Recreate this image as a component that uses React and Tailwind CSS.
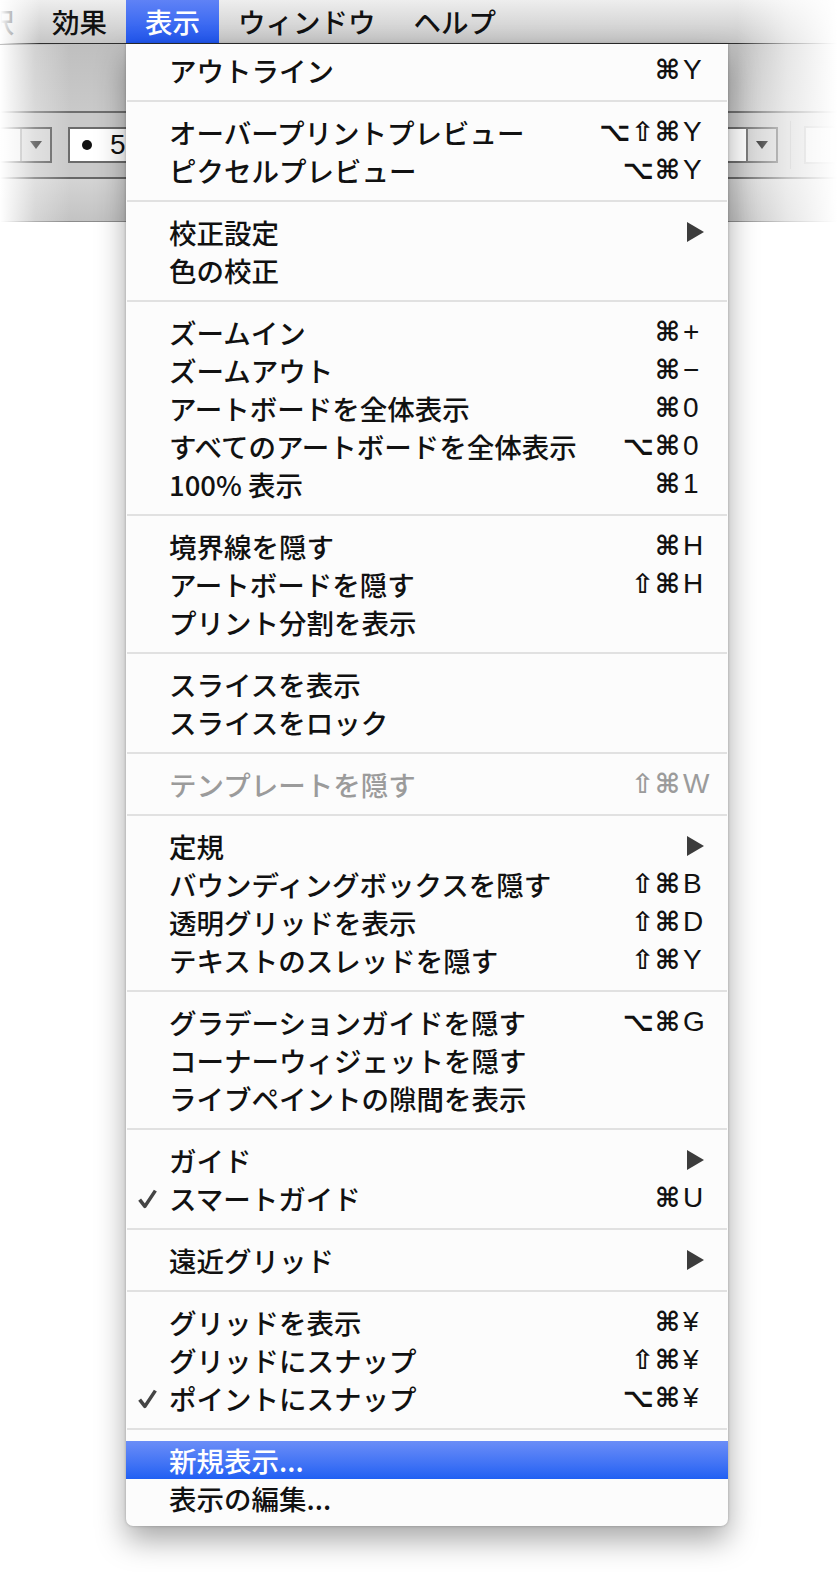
import React from "react";

const groups = [
  [{ label: "アウトライン", mods: "⌘", key: "Y" }],
  [
    { label: "オーバープリントプレビュー", mods: "⌥⇧⌘", key: "Y" },
    { label: "ピクセルプレビュー", mods: "⌥⌘", key: "Y" },
  ],
  [{ label: "校正設定", sub: true }, { label: "色の校正" }],
  [
    { label: "ズームイン", mods: "⌘", key: "+" },
    { label: "ズームアウト", mods: "⌘", key: "−" },
    { label: "アートボードを全体表示", mods: "⌘", key: "0" },
    { label: "すべてのアートボードを全体表示", mods: "⌥⌘", key: "0" },
    { label: "100% 表示", mods: "⌘", key: "1" },
  ],
  [
    { label: "境界線を隠す", mods: "⌘", key: "H" },
    { label: "アートボードを隠す", mods: "⇧⌘", key: "H" },
    { label: "プリント分割を表示" },
  ],
  [{ label: "スライスを表示" }, { label: "スライスをロック" }],
  [{ label: "テンプレートを隠す", mods: "⇧⌘", key: "W", disabled: true }],
  [
    { label: "定規", sub: true },
    { label: "バウンディングボックスを隠す", mods: "⇧⌘", key: "B" },
    { label: "透明グリッドを表示", mods: "⇧⌘", key: "D" },
    { label: "テキストのスレッドを隠す", mods: "⇧⌘", key: "Y" },
  ],
  [
    { label: "グラデーションガイドを隠す", mods: "⌥⌘", key: "G" },
    { label: "コーナーウィジェットを隠す" },
    { label: "ライブペイントの隙間を表示" },
  ],
  [
    { label: "ガイド", sub: true },
    { label: "スマートガイド", checked: true, mods: "⌘", key: "U" },
  ],
  [{ label: "遠近グリッド", sub: true }],
  [
    { label: "グリッドを表示", mods: "⌘", key: "¥" },
    { label: "グリッドにスナップ", mods: "⇧⌘", key: "¥" },
    { label: "ポイントにスナップ", checked: true, mods: "⌥⌘", key: "¥" },
  ],
  [{ label: "新規表示...", active: true }, { label: "表示の編集..." }],
];

function Check() {
  return (
    <svg width="21" height="21" viewBox="0 0 20 20">
      <path d="M2.5 11 L7.5 17.5 L17.5 2.5" fill="none" stroke="#454545" strokeWidth="3.4" strokeLinejoin="round" />
    </svg>
  );
}

function MenuRow({ item }) {
  const color = item.active ? "text-white" : item.disabled ? "text-[#9b9b9b]" : "text-[#111]";
  return (
    <div
      className={`flex h-[38px] items-center ${color} ${
        item.active ? "bg-gradient-to-b from-[#6b8df7] to-[#1f5ff3]" : ""
      }`}
    >
      <div className="flex w-[43px] justify-center">{item.checked ? <Check /> : null}</div>
      <div className="flex-1 text-[27.5px] font-medium leading-[38px] whitespace-nowrap">{item.label}</div>
      {item.key ? (
        <div className="flex items-center pr-[14px] font-['Liberation_Sans','DejaVu_Sans',sans-serif] text-[28px] leading-[38px]">
          <span className="font-['DejaVu_Sans',sans-serif] text-[27px] font-bold tracking-[1px]">{item.mods}</span>
          <span className="w-[33px] pl-[2px]">{item.key}</span>
        </div>
      ) : null}
      {item.sub ? (
        <svg className="mr-[24px]" width="17" height="20" viewBox="0 0 17 20">
          <path d="M0 0 L17 10 L0 20 Z" fill="#3c3c3c" />
        </svg>
      ) : null}
    </div>
  );
}

function Separator() {
  return (
    <div className="flex h-[24px] items-center px-[1px]">
      <div className="h-[2px] w-full bg-[#e1e1e1]" />
    </div>
  );
}

function DropTriangle({ color }) {
  return (
    <svg width="12" height="8" viewBox="0 0 12 8">
      <path d="M0 0 L12 0 L6 8 Z" fill={color} />
    </svg>
  );
}

export default function App() {
  const bar = ["選択", "効果", "表示", "ウィンドウ", "ヘルプ"];
  return (
    <div className="relative h-[1572px] w-[837px] overflow-hidden bg-white font-['Noto_Sans_CJK_JP',sans-serif]">
      {/* menu bar */}
      <div className="flex h-[44px] border-b border-[#2e2e2e] bg-gradient-to-b from-[#eeeeee] to-[#c6c6c6]">
        {bar.map((name, i) => (
          <div
            key={name}
            className={`flex items-center px-[19px] text-[27.5px] font-medium ${i === 0 ? "ml-[-60px]" : ""} ${
              name === "表示" ? "bg-gradient-to-b from-[#5f82f6] to-[#1f55ee] text-white" : "text-[#111]"
            }`}
          >
            {name}
          </div>
        ))}
      </div>

      {/* toolbar */}
      <div className="h-[67px] bg-gradient-to-b from-[#bfbfbf] to-[#c9c9c9]" />
      <div className="h-[2px] bg-[#6f6f6f]" />
      <div className="flex h-[64px] items-center bg-[#c9c9c9]">
        <div className="ml-[-40px] flex h-[36px] border-2 border-[#5e5e5e]">
          <div className="w-[58px] bg-[#ececec]" />
          <div className="flex w-[30px] items-center justify-center border-l-2 border-[#9a9a9a] bg-[#d3d3d3]">
            <DropTriangle color="#333" />
          </div>
        </div>
        <div className="ml-[16px] flex h-[36px] border-2 border-[#6b6b6b]">
          <div className="flex w-[676px] items-center bg-white pl-[12px] font-['Liberation_Sans',sans-serif] text-[28px] text-[#111]">
            <span className="mr-[18px] inline-block h-[10px] w-[10px] rounded-full bg-[#111]" />
            5
          </div>
          <div className="flex w-[30px] items-center justify-center border-l-2 border-[#6b6b6b] bg-[#cfcfcf]">
            <DropTriangle color="#111" />
          </div>
        </div>
        <div className="ml-[12px] h-[48px] w-[2px] bg-[#adadad]" />
        <div className="ml-[13px] h-[38px] w-[60px] border-2 border-[#a8a8a8] bg-[#e4e4e4]" />
      </div>
      <div className="h-[2px] bg-[#666]" />
      <div className="h-[42px] bg-gradient-to-b from-[#d4d4d4] to-[#c3c3c3]" />
      <div className="h-[1px] bg-[#8c8c8c]" />

      {/* edge fades */}
      <div className="pointer-events-none absolute left-0 top-0 h-[44px] w-[40px] bg-gradient-to-r from-white to-transparent" />
      <div className="pointer-events-none absolute left-0 top-[45px] h-[180px] w-[70px] bg-gradient-to-r from-white via-white/30 to-transparent" />
      <div className="pointer-events-none absolute right-0 top-0 h-[230px] w-[100px] bg-gradient-to-l from-white via-white/60 to-transparent" />

      {/* dropdown */}
      <div className="absolute left-[126px] top-[44px] z-10 w-[602px] rounded-b-[7px] bg-[#fcfcfc] pb-[9px] pt-[7px] shadow-[0_14px_30px_rgba(0,0,0,0.35),0_0_3px_rgba(0,0,0,0.25)]">
        {groups.map((group, gi) => (
          <div key={gi}>
            {gi > 0 ? <Separator /> : null}
            {group.map((item) => (
              <MenuRow key={item.label} item={item} />
            ))}
          </div>
        ))}
      </div>
    </div>
  );
}
